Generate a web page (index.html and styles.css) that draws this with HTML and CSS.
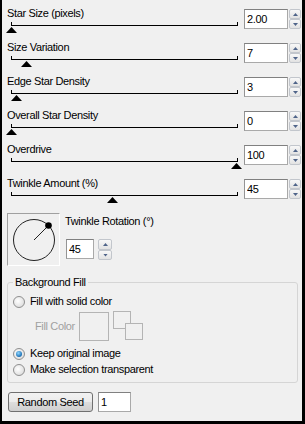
FILE: index.html
```html
<!DOCTYPE html>
<html>
  <head>
    <title>Star Effect</title>
    <link rel="stylesheet" href="styles.css">
  </head>
  <body>
    <div class="panel">
      <div class="row">
        <div class="slider">
          <div class="label">Star Size (pixels)</div>
          <div class="track"><span class="thumb" style="left: -6px"></span></div>
        </div>
        <input type="text" class="field" value="2.00" />
        <div class="spin"><span class="up"></span><span class="down"></span></div>
      </div>
      <div class="row">
        <div class="slider">
          <div class="label">Size Variation</div>
          <div class="track"><span class="thumb" style="left: 9px"></span></div>
        </div>
        <input type="text" class="field" value="7" />
        <div class="spin"><span class="up"></span><span class="down"></span></div>
      </div>
      <div class="row">
        <div class="slider">
          <div class="label">Edge Star Density</div>
          <div class="track"><span class="thumb" style="left: -1px"></span></div>
        </div>
        <input type="text" class="field" value="3" />
        <div class="spin"><span class="up"></span><span class="down"></span></div>
      </div>
      <div class="row">
        <div class="slider">
          <div class="label">Overall Star Density</div>
          <div class="track"><span class="thumb" style="left: -6px"></span></div>
        </div>
        <input type="text" class="field" value="0" />
        <div class="spin"><span class="up"></span><span class="down"></span></div>
      </div>
      <div class="row">
        <div class="slider">
          <div class="label">Overdrive</div>
          <div class="track"><span class="thumb" style="left: 219px"></span></div>
        </div>
        <input type="text" class="field" value="100" />
        <div class="spin"><span class="up"></span><span class="down"></span></div>
      </div>
      <div class="row">
        <div class="slider">
          <div class="label">Twinkle Amount (%)</div>
          <div class="track"><span class="thumb" style="left: 95px"></span></div>
        </div>
        <input type="text" class="field" value="45" />
        <div class="spin"><span class="up"></span><span class="down"></span></div>
      </div>

      <div class="dial-row">
        <div class="dial">
          <svg width="51" height="51" viewBox="0 0 51 51">
            <circle cx="26" cy="26" r="20.5" fill="none" stroke="#222" stroke-width="1" />
            <line x1="26" y1="26" x2="40.5" y2="11.5" stroke="#222" stroke-width="1" />
            <circle cx="40.5" cy="11.5" r="3.3" fill="#000" />
          </svg>
        </div>
        <div class="dial-side">
          <div class="label">Twinkle Rotation (°)</div>
          <div class="dial-input">
            <input type="text" class="field small" value="45" />
            <div class="spin"><span class="up"></span><span class="down"></span></div>
          </div>
        </div>
      </div>

      <fieldset class="group">
        <legend>Background Fill</legend>
        <div class="option first"><span class="radio"></span>Fill with solid color</div>
        <div class="fill-row">
          <span class="fill-label">Fill Color</span>
          <span class="swatch"></span>
          <svg class="swap" width="31" height="30" viewBox="0 0 31 30">
            <rect x="0.5" y="0.5" width="17" height="17" fill="none" stroke="#b4b4b4" />
            <rect x="12.5" y="12.5" width="17" height="16" fill="#f0f0f0" stroke="#b4b4b4" />
          </svg>
        </div>
        <div class="option keep"><span class="radio checked"></span>Keep original image</div>
        <div class="option"><span class="radio"></span>Make selection transparent</div>
      </fieldset>

      <div class="seed-row">
        <button class="btn">Random Seed</button>
        <input type="text" class="field seed" value="1" />
      </div>
    </div>
  </body>
</html>
```

FILE: styles.css
```css
body {
  margin: 0;
  padding: 0;
  font-family: "Liberation Sans", Arial, sans-serif;
  font-size: 11px;
  letter-spacing: -0.35px;
  color: #000000;
  background-color: #f0f0f0;
}

.panel {
  width: 305px;
  height: 424px;
  box-sizing: border-box;
  padding: 7px 0 0 5px;
  background-color: #f0f0f0;
  border-left: 2px solid #000000;
  border-right: 3px solid #000000;
  border-bottom: 3px solid #000000;
}

.label {
  height: 13px;
  line-height: 13px;
  white-space: nowrap;
}

.row {
  display: grid;
  grid-template-columns: 237px 44px 12px;
  align-items: start;
  height: 34px;
}

.track {
  position: relative;
  margin: 2px 0 0 4px;
  width: 227px;
  height: 4px;
  box-sizing: border-box;
  border-left: 1px solid #000000;
  border-right: 1px solid #000000;
  border-bottom: 1px solid #000000;
}

.thumb {
  position: absolute;
  top: 5px;
  width: 11px;
  height: 6px;
  background-color: #000000;
  clip-path: polygon(50% 0, 100% 100%, 0 100%);
}

.field {
  margin: 2px 0 0 0;
  width: 44px;
  height: 20px;
  box-sizing: border-box;
  padding: 0 0 0 2px;
  border: 1px solid #a9a9a9;
  border-top-color: #808080;
  border-left-color: #949494;
  background-color: #ffffff;
  font-family: "Liberation Sans", Arial, sans-serif;
  font-size: 11px;
  letter-spacing: -0.35px;
  color: #000000;
  outline: none;
}

.spin {
  margin: 2px 0 0 1px;
  width: 12px;
  height: 20px;
  display: flex;
  flex-direction: column;
}

.spin span {
  flex: 1;
  position: relative;
  box-sizing: border-box;
  border: 1px solid #c2c6cc;
  border-radius: 2px;
  background: linear-gradient(#f8f8f8, #e2e2e2);
}

.spin span::before {
  content: "";
  position: absolute;
  left: 3px;
  top: 3px;
  width: 5px;
  height: 3px;
  background-color: #4f6489;
}

.spin .up::before {
  clip-path: polygon(50% 0, 100% 100%, 0 100%);
}

.spin .down::before {
  clip-path: polygon(0 0, 100% 0, 50% 100%);
}

.dial-row {
  display: flex;
  margin-top: 2px;
}

.dial {
  width: 53px;
  height: 53px;
  box-sizing: border-box;
  border: 1px solid #ffffff;
  border-top-color: #a0a0a0;
  border-left-color: #a0a0a0;
}

.dial svg {
  display: block;
}

.dial-side {
  margin: 2px 0 0 5px;
}

.dial-input {
  display: flex;
  margin: 9px 0 0 1px;
}

.field.small {
  width: 28px;
}

.dial-input .spin {
  margin-left: 4px;
  width: 14px;
  height: 21px;
}

.dial-input .spin span::before {
  left: 4px;
}

.group {
  margin: 10px 0 0 0;
  width: 291px;
  box-sizing: border-box;
  padding: 0 5px 6px 5px;
  border: 1px solid #d5d5d5;
  border-radius: 3px;
}

.group legend {
  padding: 0 2px;
  line-height: 13px;
}

.option {
  display: flex;
  align-items: center;
  height: 13px;
  line-height: 13px;
  margin-top: 3px;
  white-space: nowrap;
}

.option.first {
  margin-top: 6px;
}

.option.keep {
  margin-top: 6px;
}

.radio {
  position: relative;
  width: 12px;
  height: 12px;
  margin-right: 5px;
  box-sizing: border-box;
  border: 1px solid #8f8f8f;
  border-radius: 50%;
  background: radial-gradient(circle at 40% 40%, #ffffff, #d4d4d4);
}

.radio.checked::after {
  content: "";
  position: absolute;
  left: 2px;
  top: 2px;
  width: 6px;
  height: 6px;
  border-radius: 50%;
  background: radial-gradient(circle at 40% 35%, #8fd6ff, #1b6fb4 70%, #0d3f78);
}

.fill-row {
  display: flex;
  align-items: center;
  margin-top: 3px;
  padding-left: 22px;
}

.fill-label {
  width: 44px;
  color: #a0a0a0;
}

.swatch {
  width: 30px;
  height: 29px;
  box-sizing: border-box;
  border: 1px solid #b4b4b4;
}

.swap {
  display: block;
  margin-left: 4px;
}

.seed-row {
  display: flex;
  margin: 9px 0 0 1px;
}

.btn {
  width: 85px;
  height: 20px;
  padding: 0;
  border: 1px solid #707070;
  border-radius: 3px;
  background: linear-gradient(#f2f2f2 0%, #ebebeb 50%, #dddddd 50%, #cfcfcf 100%);
  font-family: "Liberation Sans", Arial, sans-serif;
  font-size: 11px;
  letter-spacing: -0.35px;
  color: #000000;
}

.field.seed {
  margin: 0 0 0 5px;
  width: 33px;
}
```
